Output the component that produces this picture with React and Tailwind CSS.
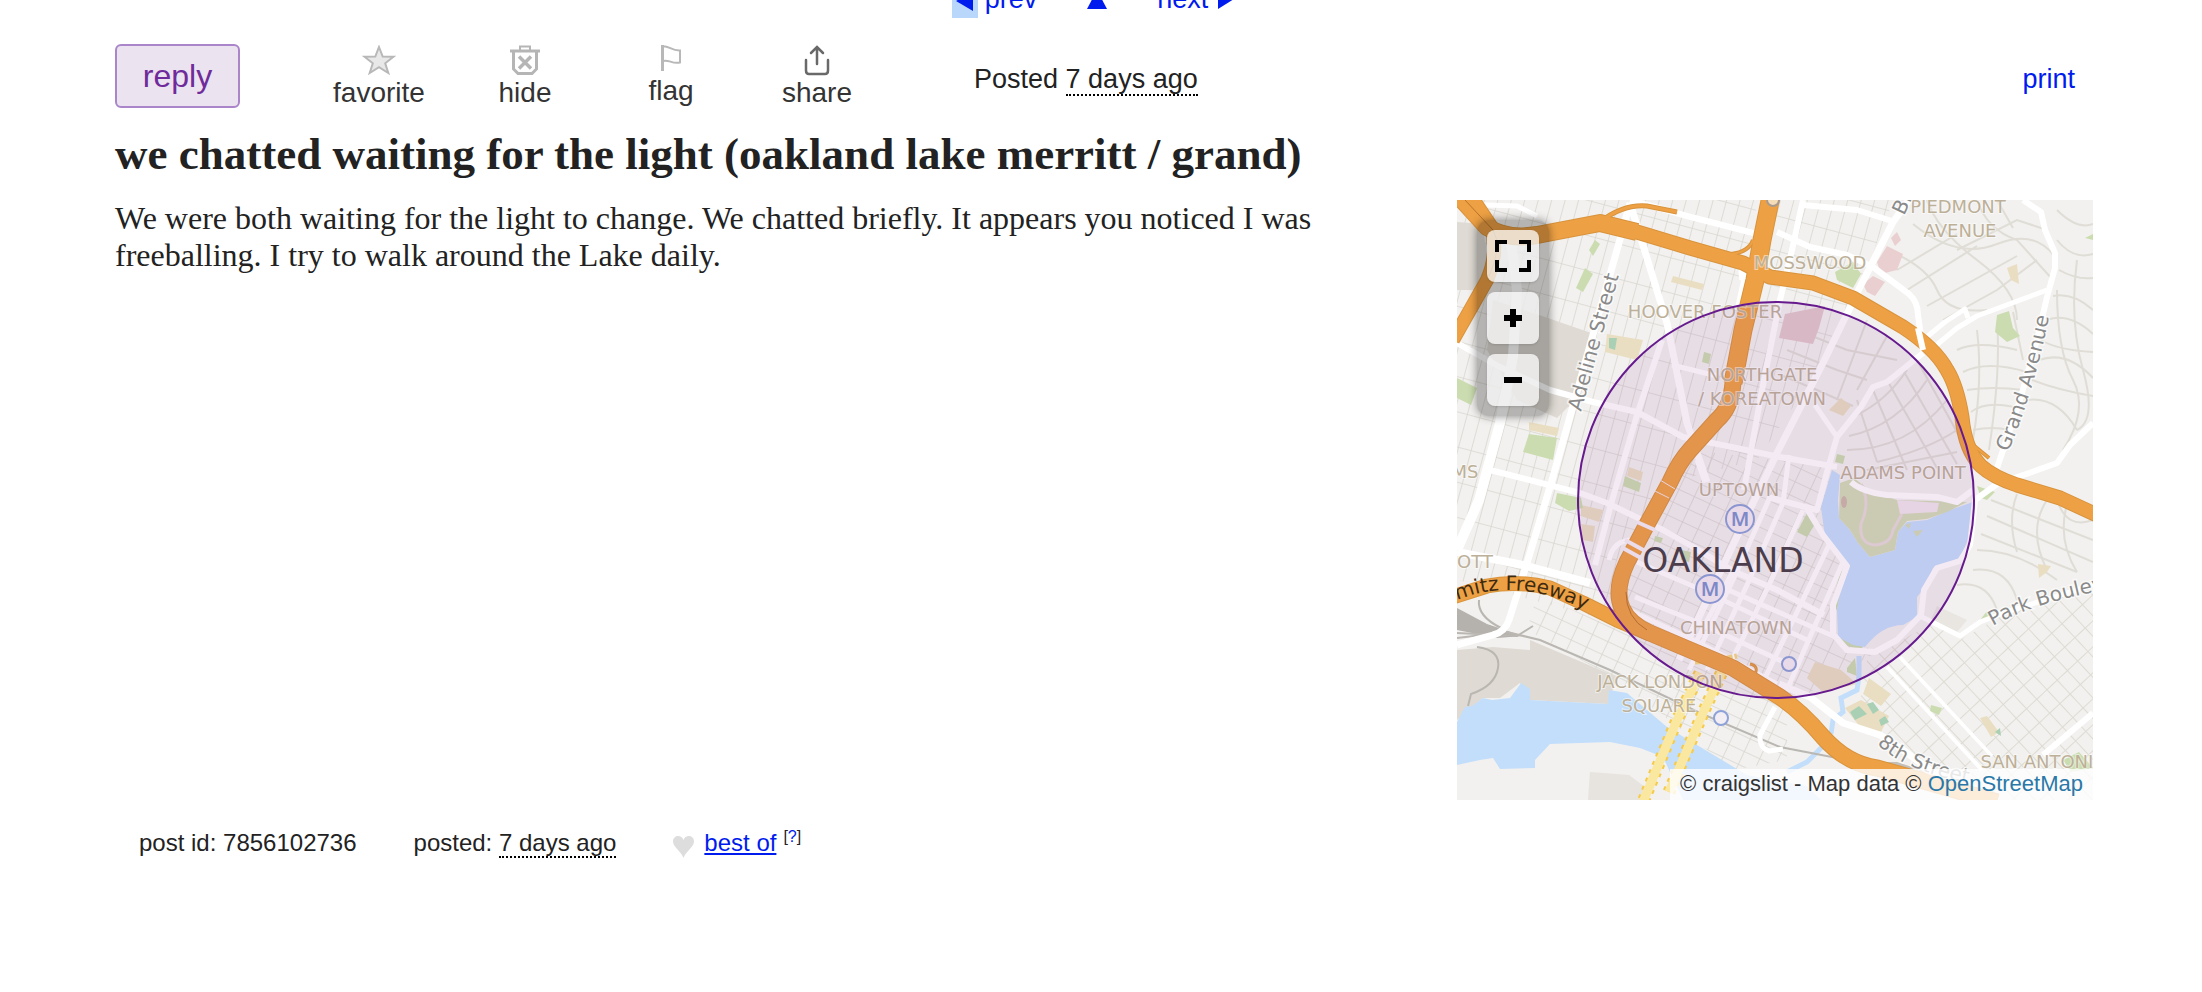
import React, { useState } from "react";

const MAJOR_STREETS = [
  { w: 10, d: "M53 33 L60 90 L56 157 L43 223 L22 300 L0 350" },
  { w: 7, d: "M173 3 L160 50 L150 85 L96 277 L70 363 L52 420 Q48 432 36 435 L0 445" },
  { w: 7, d: "M173 3 L210 123 L230 223 L250 282" },
  { w: 6, d: "M173 0 L230 16 L300 34" },
  { w: 6, d: "M0 143 L43 167 L93 190 L136 202 L180 212 L226 237 L260 244 L323 257 L380 267" },
  { w: 6, d: "M33 270 L123 293 L150 303 L206 330 L238 348 L276 371 L320 390 L367 415" },
  { w: 6, d: "M205 140 L180 215 L154 304 L138 365" },
  { w: 5, d: "M215 165 L260 176" },
  { w: 8, d: "M0 352 L66 365 L133 383" },
  { w: 7, d: "M452 0 L436 22 L403 87 L366 163 L320 253 L276 345 L250 400 L222 460" },
  { w: 6, d: "M346 0 L335 50 L323 100 L305 190 L287 290" },
  { w: 6, d: "M346 5 L400 10 L438 22" },
  { w: 6, d: "M320 32 L353 47 L390 55 L416 67 L452 94 Q461 102 461 115 L466 150" },
  { w: 6, d: "M466 153 L430 182 L416 187 L404 207 L380 237 L370 272 L360 310 L310 297" },
  { w: 5, d: "M358 205 L380 237" },
  { w: 5, d: "M466 140 L488 122 L508 109 L511 118" },
  { w: 5, d: "M476 148 L500 128 L520 116 L590 90" },
  { w: 6, d: "M566 0 L584 12 L588 30 L598 53 L598 68 L590 97 L580 140 L563 200 L540 268" },
  { w: 6, d: "M636 223 L613 245 L600 263 L575 272 L540 284 L518 300 L513 345 L503 361 L480 368 L467 390 L464 415 L440 440 L418 452 L390 450 L376 434 L376 405 L390 366 L366 335 L350 309" },
  { w: 6, d: "M394 282 Q405 292 430 295 L480 297 L500 302 L516 290" },
  { w: 5, d: "M465 417 L503 436 L523 422 L546 413 L636 385" },
  { w: 7, d: "M322 484 L353 497 L386 523 L423 535 L446 550 L500 590" },
  { w: 4, d: "M430 467 L525 570" },
  { w: 4, d: "M443 457 L535 556" },
  { w: 6, d: "M636 513 L586 555" },
  { w: 5, d: "M318 507 L303 535 Q302 548 312 551 L326 549" },
  { w: 5, d: "M285 80 Q282 62 288 74 L280 110" },
  { w: 5, d: "M0 4 L60 6 L80 16" },
];

const DOWNTOWN_STREETS = [
  "M313 297 L276 380 L232 470",
  "M326 303 L290 385 L250 470",
  "M346 310 L312 385 L268 474",
  "M372 345 L340 412 L308 478",
  "M386 362 L356 430 L330 490",
  "M332 255 L326 303",
  "M276 371 L240 440",
  "M260 385 L378 437",
  "M180 362 L240 388 L350 440",
  "M178 397 L240 422 L340 468",
  "M172 410 L240 442 L320 484",
  "M240 260 L248 282",
  "M152 360 Q156 340 176 340",
];

const HILL_STREETS = [
  "M456 24 Q500 60 540 44 T600 60",
  "M470 0 Q480 30 520 60 T560 120",
  "M430 50 Q470 66 480 90 T530 110",
  "M500 50 L560 20 L590 30",
  "M520 0 Q530 30 560 40 L596 80",
  "M540 0 L556 28",
  "M440 70 L500 34",
  "M450 90 L520 46",
  "M470 106 L560 56",
  "M486 120 L540 90 L580 60",
  "M600 10 Q620 30 636 24",
  "M600 40 Q616 60 636 54",
  "M602 70 Q620 80 636 78",
  "M596 96 Q616 92 636 110",
  "M590 120 Q612 112 636 134",
  "M584 140 Q600 150 636 152",
  "M582 160 Q610 150 636 178",
  "M575 180 Q600 190 636 196",
  "M570 200 Q600 196 620 230",
  "M600 90 Q600 150 616 180 T606 250",
  "M620 60 Q612 120 626 170 T620 230",
  "M500 150 Q520 140 560 150",
  "M506 172 Q530 160 570 172",
  "M510 190 Q536 186 566 190",
  "M514 212 Q530 200 560 208",
  "M516 230 Q536 226 552 230",
  "M520 130 Q526 180 516 240",
  "M540 122 Q544 170 532 250",
  "M556 112 L566 160",
  "M534 300 L636 340",
  "M530 316 L636 362",
  "M524 334 L620 372",
  "M520 350 Q560 350 600 380",
  "M516 370 Q550 366 560 400",
  "M500 385 Q530 380 540 410",
  "M560 294 Q550 320 560 352",
  "M590 300 Q570 330 590 370",
  "M610 304 Q600 340 620 372",
  "M636 320 Q610 330 600 300",
];

const MIDTOWN_STREETS = [
  "M400 215 Q430 200 450 170",
  "M392 236 Q440 226 470 180",
  "M390 250 Q450 250 490 200",
  "M420 262 Q470 250 500 230",
  "M400 200 L420 262",
  "M416 190 L450 270",
  "M430 180 L480 268",
  "M446 170 L500 264",
  "M460 160 L510 250",
  "M410 270 L500 252",
  "M340 130 L390 150 L440 160",
  "M330 150 L380 170 L410 180",
  "M326 176 L360 190 L396 206",
  "M390 110 L356 180",
  "M410 120 L380 200",
  "M430 136 L400 190",
];

const FREEWAYS = [
  { w: 14, d: "M0 -6 L30 27 Q50 40 80 35 L143 23 L180 32 L233 48 L286 63 L313 77 L356 83 L396 98 L446 127 Q478 148 490 170 Q500 186 505 217 Q508 250 524 266 Q536 277 560 285 L603 298 L640 315" },
  { w: 17, d: "M0 -6 L30 27 Q50 40 80 35 L143 23 L180 32" },
  { w: 13, d: "M14 -4 L34 26 Q42 52 30 80 L-4 140" },
  { w: 18, d: "M314 -4 L305 40 L298 80 L286 130 L276 183" },
  { w: 16, d: "M276 180 L276 183 Q274 208 260 220 L233 250 Q222 262 213 282 L188 328 L170 362 Q157 390 165 408 Q172 424 193 433 L226 447 L276 468 L323 497 Q345 512 366 537 Q390 564 420 568 L463 580 L540 602" },
  { w: 14, d: "M-4 397 L30 386 Q60 380 93 388 L126 403 L160 420 L193 434" },
  { w: 4, d: "M143 22 Q166 4 190 6 L220 12" },
  { w: 3, d: "M274 54 Q292 52 296 40" },
  { w: 3, d: "M510 240 L532 258" },
  { w: 2, d: "M293 464 Q303 466 297 476" },
];

const PLACES = [
  { x: 248, y: 118, text: "HOOVER FOSTER" },
  { x: 353, y: 69, text: "MOSSWOOD" },
  { x: 501, y: 13, text: "PIEDMONT" },
  { x: 503, y: 37, text: "AVENUE" },
  { x: 305, y: 181, text: "NORTHGATE" },
  { x: 305, y: 205, text: "/ KOREATOWN" },
  { x: 282, y: 296, text: "UPTOWN" },
  { x: 446, y: 279, text: "ADAMS POINT" },
  { x: 8, y: 278, text: "MS" },
  { x: 18, y: 368, text: "OTT" },
  { x: 279, y: 434, text: "CHINATOWN" },
  { x: 203, y: 488, text: "JACK LONDON" },
  { x: 202, y: 512, text: "SQUARE" },
  { x: 587, y: 568, text: "SAN ANTONIO" },
];

const PARKS = [
  "M119 88 L128 68 L136 74 L126 92Z",
  "M132 50 L138 40 L143 44 L136 56Z",
  "M0 178 L20 188 L14 205 L0 198Z",
  "M72 234 L100 238 L96 260 L66 252Z",
  "M378 72 L396 62 L404 74 L396 88 L380 80Z",
  "M540 115 L552 111 L556 128 L563 136 L550 142 L538 132Z",
  "M100 293 L124 298 L126 308 L112 311 L98 303Z",
  "M247 152 L254 154 L252 164 L245 162Z",
  "M168 276 L184 283 L182 292 L166 286Z",
  "M350 313 L360 321 L350 337 L340 332Z",
  "M380 254 L388 256 L386 264 L378 262Z",
  "M384 370 L388 374 L380 410 L374 405Z",
  "M380 436 L406 446 L404 450 L384 444Z",
  "M520 424 L530 411 L533 416Z",
  "M474 505 L485 508 L482 515 L473 511Z",
  "M628 38 L636 34 L636 40Z",
  "M606 560 L622 552 L636 568 L614 572Z",
  "M390 468 L398 458 L400 476 L390 472Z",
  "M520 286 L538 292 L530 300 L524 298Z",
  "M224 350 L234 352 L232 362 L224 360Z",
  "M198 336 L206 338 L204 343 L197 341Z",
];

const SAND = [
  "M216 76 L247 84 L245 90 L214 82Z",
  "M150 134 L186 140 L180 160 L148 152Z",
  "M72 222 L102 228 L100 236 L72 230Z",
  "M550 68 L560 64 L562 84 L554 80Z",
  "M372 210 L384 198 L394 206 L386 216Z",
  "M412 478 L434 494 L424 506 L406 494Z",
  "M388 508 L404 500 L432 516 L424 532 L404 528Z",
  "M523 518 L530 516 L542 532 L534 537Z",
  "M581 364 L594 366 L590 372 L582 378Z",
  "M358 462 L384 470 L400 484 L366 492 L350 478Z",
  "M172 267 L186 272 L184 281 L170 276Z",
  "M124 305 L146 310 L142 322 L124 316Z",
  "M124 324 L138 326 L136 342 L126 340Z",
];

function StreetMap() {
  return (
    <svg
      viewBox="0 0 636 600"
      className="block h-full w-full"
      role="img"
      aria-label="Map of Oakland"
    >
      <defs>
        <pattern id="westGrid" width="13" height="34" patternUnits="userSpaceOnUse" patternTransform="rotate(15)">
          <path d="M0 0V34M0 0H13" stroke="#d9d6cf" strokeWidth="1.6" fill="none" />
        </pattern>
        <pattern id="downtownGrid" width="17" height="14" patternUnits="userSpaceOnUse" patternTransform="rotate(25)">
          <path d="M0 0V14M0 0H17" stroke="#d9d6cf" strokeWidth="1.6" fill="none" />
        </pattern>
        <pattern id="eastGrid" width="19" height="14" patternUnits="userSpaceOnUse" patternTransform="rotate(47)">
          <path d="M0 0V14M0 0H19" stroke="#dedbd2" strokeWidth="2" fill="none" />
        </pattern>
        <path id="adelinePath" d="M124 212 L163 71" />
        <path id="grandPath" d="M551 252 Q578 190 594 107" />
        <path id="parkPath" d="M536 426 Q580 400 680 384" />
        <path id="eighthPath" d="M420 544 Q453 576 540 588" />
        <path id="freewayPath" d="M0 400 Q65 374 140 416" />
      </defs>

      <rect width="636" height="600" fill="#f2f1ef" />

      {/* minor streets */}
      <path d="M0 0H300L286 130L276 183L213 282L160 360L150 420L0 380Z" fill="url(#westGrid)" />
      <path d="M320 0H436L403 87L340 74L310 70Z" fill="url(#westGrid)" />
      <path d="M298 80L400 100L366 163L300 260L213 282L276 183Z" fill="url(#westGrid)" />
      <path d="M233 250L380 267L363 317L390 367L374 430L420 452L340 500L170 425L165 375Z" fill="url(#downtownGrid)" />
      <path d="M80 395L330 500L330 560L276 570L160 480L70 430Z" fill="url(#downtownGrid)" />
      <path d="M475 423L503 440L546 415L636 388V600H500L400 520L410 460Z" fill="url(#eastGrid)" />
      {[...HILL_STREETS, ...MIDTOWN_STREETS].map((d) => (
        <path key={d} d={d} fill="none" stroke="#dfddd5" strokeWidth="2" />
      ))}

      {/* land use */}
      <g fill="#dfdbd4">
        <path d="M0 22 L26 24 L30 60 L24 90 L0 90Z" />
        <path d="M36 100 L88 117 L140 135 L118 200 L100 218 L60 200 L30 150Z" />
        <path d="M0 450 L36 447 L73 450 L73 440 L160 477 L151 504 L73 500 L63 483 L43 498 L26 498 L0 520Z" />
        <path d="M133 572 L172 575 L192 590 L186 600 L131 600Z" opacity="0.6" />
        <path d="M480 406 L510 420 L500 432 L474 420Z" opacity="0.5" />
      </g>
      <path d="M0 408 L30 424 L66 436 L40 438 L0 430Z" fill="#b5b2ad" />
      <path d="M396 562 L440 562 L470 572 L420 570Z" fill="#c3bfb8" />
      <g fill="#eacfd0">
        <path d="M434 38 L440 32 L444 40 L438 46Z" />
        <path d="M420 62 L430 46 L446 54 L440 70 L424 74Z" />
        <path d="M406 84 L416 76 L428 82 L418 96 L410 92Z" />
        <path d="M328 114 L368 106 L362 128 L356 144 L322 138Z" fill="#e3c8cc" />
      </g>
      {SAND.map((d) => (
        <path key={d} d={d} fill="#e9dec2" />
      ))}
      {PARKS.map((d) => (
        <path key={d} d={d} fill="#cbddb0" />
      ))}
      <g fill="#a9d0b4">
        <path d="M152 138 L160 138 L158 150 L152 148Z" />
        <path d="M393 512 L402 506 L410 514 L398 520Z" />
        <path d="M410 504 L416 502 L422 510 L416 514Z" />
        <path d="M422 520 L428 516 L432 522 L424 526Z" />
        <path d="M538 532 L543 528 L544 536Z" />
      </g>

      {/* water */}
      <g fill="#c3defb">
        <path d="M0 522 L8 507 L15 506 L26 498 L35 500 L53 498 L64 483 L73 489 L73 500 L151 504 L152 490 L170 493 L210 527 L240 545 L290 575 L350 586 L364 600 L226 600 L206 557 L183 548 L153 542 L93 544 L78 560 L78 568 L43 569 L36 558 L23 560 L0 565Z" />
        <path d="M375 270 L383 275 L381 300 L382 318 L393 330 L401 343 L413 357 L438 350 L441 332 L450 322 L470 320 L493 310 L516 302 L513 335 L503 358 L476 368 L468 387 L460 397 L460 417 L446 425 Q425 425 408 447 L396 445 L381 437 L380 410 L385 380 L391 365 L368 337 L364 307Z" />
      </g>
      <path d="M402 456 L402 476 L400 490 L384 498 L386 512 L376 520 L374 534" fill="none" stroke="#c3defb" strokeWidth="5" />
      <path d="M366 546 L350 562 L330 572" fill="none" stroke="#c3defb" strokeWidth="5" />
      <path d="M383 283 L397 278 L412 290 L440 300 L510 302 L490 312 L470 319 L450 321 L441 332 L438 350 L413 357 L401 343 L393 330 L382 318Z" fill="#d3ddb8" />
      <path d="M440 300 L482 303 L480 312 L443 314Z" fill="#f1e6ee" />
      <g fill="#d3ddb8">
        <path d="M448 325 L454 323 L452 329Z" />
        <path d="M456 331 L466 330 L460 337Z" />
      </g>
      <path d="M404 284 Q414 302 404 324 Q402 344 418 345 Q434 344 436 330 L445 314" fill="none" stroke="#e6dbd8" strokeWidth="3" />
      <ellipse cx="387" cy="302" rx="3" ry="6" fill="#cdb8aa" />

      {/* railways */}
      <g fill="none" stroke="#bab7b2" strokeWidth="2">
        <path d="M0 438 L50 432 L83 440 L153 470 L243 513 L323 547 L380 558 L446 567" />
        <path d="M0 433 L60 436 L76 426" />
        <path d="M20 447 Q44 450 41 468 Q38 486 14 494 L11 506" />
        <path d="M22 400 Q20 416 44 428" />
      </g>

      {/* streets */}
      <g fill="none" stroke="#fff" strokeLinejoin="round">
        {DOWNTOWN_STREETS.map((d) => (
          <path key={d} d={d} strokeWidth="5" />
        ))}
        {MAJOR_STREETS.map((street) => (
          <path key={street.d} d={street.d} strokeWidth={street.w} />
        ))}
      </g>

      {/* tunnel under the estuary */}
      <g fill="none">
        <path d="M243 473 L220 520 L186 602M268 465 L246 513 L212 592" stroke="#f5cb4e" strokeWidth="13" strokeDasharray="4 5" />
        <path d="M243 473 L220 520 L186 602M268 465 L246 513 L212 592" stroke="#fbe8a0" strokeWidth="9" />
        <path d="M238 462 L262 460 L280 456" stroke="#f5d97c" strokeWidth="5" strokeDasharray="6 2" />
      </g>

      {/* freeways */}
      <g fill="none" strokeLinejoin="round">
        {FREEWAYS.map((road) => (
          <path key={road.d} d={road.d} stroke="#d9933c" strokeWidth={road.w + 1} />
        ))}
        {FREEWAYS.map((road) => (
          <path key={road.d} d={road.d} stroke="#eea144" strokeWidth={road.w - 1} />
        ))}
        <path d="M8 0 L36 30 Q46 46 32 76M169 392 Q169 418 190 430" stroke="#b8742a" strokeWidth="1" />
        <path d="M203 280 L218 289M198 291 L212 298" stroke="#f3e6e8" strokeWidth="1" />
        <path d="M180 322 L198 330M168 340 L190 352M164 347 L184 358" stroke="#f6f0f6" strokeWidth="4" />
      </g>
      <circle cx="316" cy="0" r="6" fill="#f4dcb8" stroke="#a8998c" strokeWidth="2" />
      <path d="M461 128 L466 150" stroke="#fff" strokeWidth="6" />

      {/* labels */}
      <g
        fill="#bdb098"
        stroke="#fff"
        strokeOpacity="0.5"
        strokeWidth="2"
        paintOrder="stroke"
        textAnchor="middle"
        className="font-['DejaVu_Sans',sans-serif] text-[18px]"
      >
        {PLACES.map((place) => (
          <text key={place.text} x={place.x} y={place.y}>
            {place.text}
          </text>
        ))}
      </g>
      <g
        fill="#8a8a8a"
        stroke="#fff"
        strokeOpacity="0.6"
        strokeWidth="3"
        paintOrder="stroke"
        className="font-['DejaVu_Sans',sans-serif] text-[20px]"
      >
        <text><textPath href="#adelinePath">Adeline Street</textPath></text>
        <text><textPath href="#grandPath">Grand Avenue</textPath></text>
        <text><textPath href="#parkPath">Park Boulevard</textPath></text>
        <text><textPath href="#eighthPath">8th Street</textPath></text>
        <text x="447" y="16" transform="rotate(-65 447 16)">Broadway</text>
      </g>
      <text fill="#3d2a10" className="font-['DejaVu_Sans',sans-serif] text-[20px]">
        <textPath href="#freewayPath">mitz Freeway</textPath>
      </text>
      <text x="266" y="372" fill="#453f45" textAnchor="middle" className="font-['DejaVu_Sans',sans-serif] text-[33px]">
        OAKLAND
      </text>

      {/* stations */}
      <g fill="#f3eef3" stroke="#8ca2d8" strokeWidth="2">
        <circle cx="283" cy="319" r="14" />
        <circle cx="253" cy="389" r="14" />
        <circle cx="264" cy="518" r="7" />
        <circle cx="332" cy="464" r="7" />
      </g>
      <g fill="#7c93cd" textAnchor="middle" className="font-['Noto_Sans',sans-serif] text-[20px] font-semibold">
        <text x="283" y="326">M</text>
        <text x="253" y="396">M</text>
      </g>

      <circle cx="319" cy="300" r="198" fill="#8e3296" fillOpacity="0.1" stroke="#661a8e" strokeWidth="2" />
    </svg>
  );
}

function MapControls({ onToggle }) {
  const buttonClass =
    "flex size-[52px] items-center justify-center rounded-lg bg-white/75 shadow-sm";

  return (
    <div className="absolute top-5 left-5 flex flex-col gap-[10px] rounded-xl bg-black/25 p-[10px] shadow-[0_0_10px_rgba(0,0,0,0.45)]">
      <button type="button" aria-label="Fullscreen" onClick={onToggle} className={buttonClass}>
        <svg width="36" height="32" viewBox="0 0 36 32" fill="none" stroke="#000" strokeWidth="4">
          <path d="M2 12V2H12M24 2H34V12M34 20V30H24M12 30H2V20" />
        </svg>
      </button>
      <button type="button" aria-label="Zoom in" className={buttonClass}>
        <svg width="18" height="18" viewBox="0 0 18 18" stroke="#000" strokeWidth="6">
          <path d="M9 0V18M0 9H18" />
        </svg>
      </button>
      <button type="button" aria-label="Zoom out" className={buttonClass}>
        <svg width="18" height="18" viewBox="0 0 18 18" stroke="#000" strokeWidth="6">
          <path d="M0 9H18" />
        </svg>
      </button>
    </div>
  );
}

const StarIcon = () => (
  <svg width="34" height="32" viewBox="0 0 34 32" fill="#e8e8e8" stroke="#b8b8b8" strokeWidth="2">
    <path d="M17 2 L20.7 11.6 L31.5 11.8 L23.2 18.3 L26.3 28 L17 22.2 L7.7 28 L10.8 18.3 L2.5 11.8 L13.3 11.6Z" />
  </svg>
);

const TrashIcon = () => (
  <svg width="30" height="32" viewBox="0 0 30 32" fill="none" stroke="#b5b5b5">
    <path d="M10 5V1.5H20V5" strokeWidth="2" />
    <path d="M0 6H30" strokeWidth="3" />
    <path d="M3.5 6V24L8 28.5H22L26.5 24V6" strokeWidth="3" />
    <path d="M9 11.5L21 23.5M21 11.5L9 23.5" strokeWidth="3.5" />
  </svg>
);

const FlagIcon = () => (
  <svg width="20" height="30" viewBox="0 0 20 30" fill="none" stroke="#b8b8b8" strokeWidth="2">
    <path d="M1.5 0V26" strokeWidth="3" />
    <path d="M0 1.5C8 0 10 6 19 5.5V17.5C11 19.5 8 14 2 16" />
  </svg>
);

const ShareIcon = () => (
  <svg width="26" height="32" viewBox="0 0 26 32" fill="none" stroke="#696969" strokeWidth="2.5" strokeLinecap="round">
    <path d="M13 19V2.5M7 8L13 2L19 8" />
    <path d="M2 15V25.5Q2 29 5 29H21Q24 29 24 25.5V15" />
  </svg>
);

const ACTIONS = [
  { label: "favorite", Icon: StarIcon },
  { label: "hide", Icon: TrashIcon },
  { label: "flag", Icon: FlagIcon },
  { label: "share", Icon: ShareIcon },
];

export default function App() {
  const [expanded, setExpanded] = useState(false);

  return (
    <div className="bg-white font-['Liberation_Sans',Arial,sans-serif] text-[#222]">
      <nav className="flex h-[18px] items-end justify-center overflow-hidden pr-4 text-[27px] leading-[37px] text-[#001bee]">
        <a href="#prev" className="flex items-center gap-[7px]">
          <span className="flex h-[37px] w-[26px] items-center justify-center bg-[#b9d6fb]">
            <svg width="18" height="22" viewBox="0 0 18 22" fill="currentColor">
              <path d="M17 2V22L0 12Z" />
            </svg>
          </span>
          prev
        </a>
        <a href="#index" aria-label="back to list" className="ml-[50px] flex h-[37px] items-center">
          <svg width="20" height="20" viewBox="0 0 20 20" fill="currentColor">
            <path d="M10 0L20 19H0Z" />
          </svg>
        </a>
        <a href="#next" className="ml-[50px] flex items-center gap-[10px]">
          next
          <svg width="16" height="20" viewBox="0 0 16 20" fill="currentColor">
            <path d="M0 0V19L16 9Z" />
          </svg>
        </a>
      </nav>

      <main className="pr-[109px] pl-[115px]">
        <header className="mt-[26px] flex h-16 items-start">
          <button
            type="button"
            className="h-16 w-[125px] rounded-md border-2 border-[#ab85ca] bg-[#ebe3ef] text-[32px] leading-[36px] text-[#6f2b9b]"
          >
            reply
          </button>
          <div className="ml-[66px] flex pt-px">
            {ACTIONS.map(({ label, Icon }) => (
              <button
                key={label}
                type="button"
                className="flex w-[146px] flex-col items-center text-[28px] leading-8 text-[#333]"
              >
                <Icon />
                {label}
              </button>
            ))}
          </div>
          <p className="ml-[84px] pt-5 text-[27px] leading-[31px]">
            Posted{" "}
            <time className="border-b-2 border-dotted border-black">7 days ago</time>
          </p>
          <a href="#print" className="mr-[18px] ml-auto pt-5 text-[27px] leading-[31px] text-[#001bee]">
            print
          </a>
        </header>

        <h1 className="mt-[21px] font-['Liberation_Serif','Times_New_Roman',serif] text-[45px] leading-[50px] font-bold">
          we chatted waiting for the light (oakland lake merritt / grand)
        </h1>

        <div className="mt-[21px] flex items-start justify-between">
          <p className="flex-1 pr-8 font-['Liberation_Serif','Times_New_Roman',serif] text-[32px] leading-[37px]">
            We were both waiting for the light to change. We chatted briefly. It
            appears you noticed I was freeballing. I try to walk around the Lake
            daily.
          </p>
          <div
            className={
              expanded
                ? "fixed inset-0 z-10 overflow-hidden bg-white"
                : "relative h-[600px] w-[636px] shrink-0 overflow-hidden"
            }
          >
            <StreetMap />
            <MapControls onToggle={() => setExpanded((prev) => !prev)} />
            <div className="absolute right-0 bottom-0 bg-white/80 px-[10px] pb-px text-[22px] leading-[30px] text-[#333]">
              © craigslist - Map data ©{" "}
              <a href="#openstreetmap" className="text-[#2a78a8]">
                OpenStreetMap
              </a>
            </div>
          </div>
        </div>

        <footer className="mt-[29px] flex gap-[57px] pl-6 text-[24px] leading-7">
          <p>post id: 7856102736</p>
          <p>
            posted:{" "}
            <time className="border-b-2 border-dotted border-black">7 days ago</time>
          </p>
          <p className="flex items-start">
            <svg width="21" height="30" viewBox="0 0 21 30" fill="#ddd" className="mr-[10px]">
              <path d="M10.5 29C8 22 0 18 0 12.5C0 6 8.5 5 10.5 11C12.5 5 21 6 21 12.5C21 18 13 22 10.5 29Z" />
            </svg>
            <a href="#best-of" className="text-[#001bee] underline">
              best of
            </a>
            <span className="ml-[7px] text-base leading-4">
              [<a href="#about" className="text-[#001bee]">?</a>]
            </span>
          </p>
        </footer>
      </main>
    </div>
  );
}
